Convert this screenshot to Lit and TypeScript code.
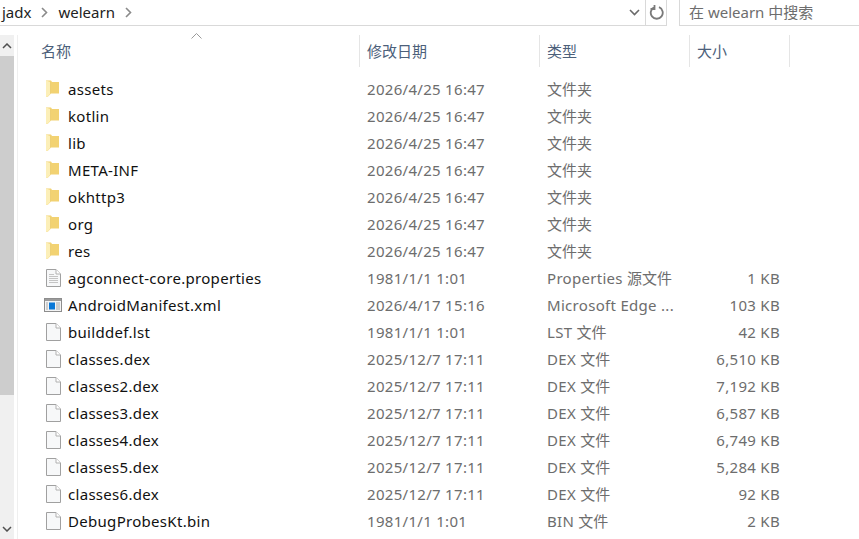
import { LitElement, html, css, svg } from "lit";
import { customElement } from "lit/decorators.js";

type Row = [string, string, string, string, string];
const D = "2026/4/25 16:47";
const rows: Row[] = [
  ["folder", "assets", D, "文件夹", ""],
  ["folder", "kotlin", D, "文件夹", ""],
  ["folder", "lib", D, "文件夹", ""],
  ["folder", "META-INF", D, "文件夹", ""],
  ["folder", "okhttp3", D, "文件夹", ""],
  ["folder", "org", D, "文件夹", ""],
  ["folder", "res", D, "文件夹", ""],
  ["text", "agconnect-core.properties", "1981/1/1 1:01", "Properties 源文件", "1 KB"],
  ["xml", "AndroidManifest.xml", "2026/4/17 15:16", "Microsoft Edge ...", "103 KB"],
  ["file", "builddef.lst", "1981/1/1 1:01", "LST 文件", "42 KB"],
  ["file", "classes.dex", "2025/12/7 17:11", "DEX 文件", "6,510 KB"],
  ["file", "classes2.dex", "2025/12/7 17:11", "DEX 文件", "7,192 KB"],
  ["file", "classes3.dex", "2025/12/7 17:11", "DEX 文件", "6,587 KB"],
  ["file", "classes4.dex", "2025/12/7 17:11", "DEX 文件", "6,749 KB"],
  ["file", "classes5.dex", "2025/12/7 17:11", "DEX 文件", "5,284 KB"],
  ["file", "classes6.dex", "2025/12/7 17:11", "DEX 文件", "92 KB"],
  ["file", "DebugProbesKt.bin", "1981/1/1 1:01", "BIN 文件", "2 KB"],
  ["file", "", "", "", ""],
];

const folderIcon = svg`<svg class="folder" width="13" height="18" viewBox="0 0 13 18">
  <path d="M0 .5h5l1 1.500h7v11.500H5L1.500 17 0 16.500z" fill="#f2d272"/>
  <path d="M0 .5 4.500 2v11.500L1.500 17 0 16.500z" fill="#fcefb8"/>
  <path d="M4.500 2v11.500" fill="none" stroke="#e8c766" stroke-width=".7"/>
</svg>`;
const fileIcon = svg`<svg width="15" height="18" viewBox="0 0 15 18">
  <path d="M.5 .5h9.500l4.500 4.500v12.500h-14z" fill="#f7f8f9" stroke="#a0a0a0"/>
  <path d="M10 .5V5h4.500" fill="#fff" stroke="#b0b0b0"/>
</svg>`;
const textIcon = svg`<svg width="15" height="18" viewBox="0 0 15 18">
  <path d="M.5 .5h9.500l4.500 4.500v12.500h-14z" fill="#f7f8f9" stroke="#a0a0a0"/>
  <path d="M10 .5V5h4.500" fill="#fff" stroke="#b0b0b0"/>
  <path d="M3 5.500h5M3 7.500h9M3 9.500h9M3 11.500h9M3 13.500h9" stroke="#c4c4c4"/>
</svg>`;
const xmlIcon = svg`<svg class="xml" width="18" height="14" viewBox="0 0 18 14">
  <rect x=".5" y=".5" width="17" height="13" fill="#f4f4f4" stroke="#8d8d8d"/>
  <rect x="1" y="1" width="16" height="2" fill="#9b9b9b"/>
  <rect x="5" y="4.500" width="6" height="7" fill="#0a78d7"/>
  <path d="M2 5h2M2 7h2M2 9h2M2 11h2M12 5h4M12 7h4M12 9h4M12 11h4" stroke="#a9a9a9"/>
</svg>`;
const icons: Record<string, unknown> = { folder: folderIcon, file: fileIcon, text: textIcon, xml: xmlIcon };

const mixed = (s: string) =>
  s.split(/([\u4e00-\u9fff]+)/).map((p) =>
    /[\u4e00-\u9fff]/.test(p) ? html`<span class="cjk">${p}</span>` : p
  );

@customElement("app-root")
export class AppRoot extends LitElement {
  static styles = css`
    :host {
      display: block;
      width: 859px;
      height: 539px;
      overflow: hidden;
      background: #fff;
      color: #1a1a1a;
      font-family: "Noto Sans", "Noto Sans CJK SC", sans-serif;
      font-size: 15px;
    }
    .top { display: flex; height: 26px; }
    .crumbs {
      flex: 0 0 667px; display: flex; align-items: center; box-sizing: border-box;
      border-bottom: 1px solid #d9d9d9; border-right: 1px solid #d9d9d9; padding-left: 2px;
      height: 26px;
    }
    .crumb { color: #222; line-height: 24px; margin-bottom: 2px; }
    .chev { margin: 0 10px 0 10px; display: flex; }
    .crumbs .spacer { flex: 1; }
    .ctl { display: flex; align-items: center; justify-content: center; height: 25px; }
    .dd { width: 16px; margin-right: 3px; }
    .refresh { width: 20px; border-left: 1px solid #d9d9d9; height: 25px; }
    .gap { flex: 0 0 12px; }
    .search {
      flex: 1; box-sizing: border-box; border-left: 1px solid #d9d9d9; border-bottom: 1px solid #d9d9d9;
      height: 26px; padding-left: 9px; color: #6d6d6d; line-height: 25px; font-size: 15px;
    }
    .main { display: flex; height: 513px; padding-top: 9px; box-sizing: border-box; }
    .sb {
      flex: 0 0 14px; height: 504px; background: #f0f0f0; display: flex; flex-direction: column;
    }
    .sb .btn { height: 21px; display: flex; align-items: center; justify-content: center; flex: none; }
    .sb .thumb { height: 339px; background: #cdcdcd; flex: none; }
    .sb .track { flex: 1; }
    .list { flex: 1; margin-left: 3px; border-left: 1px solid #efefef; min-width: 0; }
    .head, .row {
      display: grid;
      grid-template-columns: 342px 180px 150px 100px;
    }
    .head { height: 32px; position: relative; color: #4c607a; }
    .hc {
      box-sizing: border-box; border-right: 1px solid #e5e5e5; padding-left: 7px;
      line-height: 32px; height: 32px; font-size: 15px;
    }
    .hc.first { padding-left: 23px; }
    .sort { position: absolute; left: 173px; top: -2px; }
    .rows { padding-top: 9px; }
    .row { height: 27px; align-items: center; line-height: 27px; white-space: nowrap; letter-spacing: .3px; }
    .name { display: flex; align-items: center; padding-left: 28px; color: #111; }
    .ic { flex: 0 0 22px; display: flex; align-items: center; margin-bottom: 2px; }
    .ic .xml { margin-left: -2px; }
    .dim { padding-left: 7px; color: #6d6d6d; font-size: 15px; }
    .cjk { letter-spacing: 0; }
    .size { text-align: right; padding-right: 10px; padding-left: 0; }
  `;

  render() {
    const chev = html`<span class="chev"><svg width="7" height="11" viewBox="0 0 7 11"><path d="M1 1l4.500 4.500L1 10" fill="none" stroke="#8a8a8a" stroke-width="1.600"/></svg></span>`;
    return html`
      <div class="top">
        <div class="crumbs">
          <span class="crumb">jadx</span>${chev}<span class="crumb">welearn</span>${chev}
          <span class="spacer"></span>
          <span class="ctl dd"><svg width="11" height="7" viewBox="0 0 11 7"><path d="M1 1l4.500 4.500L10 1" fill="none" stroke="#6a6a6a" stroke-width="1.600"/></svg></span>
          <span class="ctl refresh"><svg width="15" height="15" viewBox="0 0 15 15"><path d="M5.500 2.200A6 6 0 1 0 10 2.200M5.500 0v4H1.500" fill="none" stroke="#7a7a7a" stroke-width="1.800"/></svg></span>
        </div>
        <div class="gap"></div>
        <div class="search">在 welearn 中搜索</div>
      </div>
      <div class="main">
        <div class="sb">
          <div class="btn"><svg width="10" height="6" viewBox="0 0 10 6"><path d="M1 5l4-4 4 4" fill="none" stroke="#505050" stroke-width="1.500"/></svg></div>
          <div class="thumb"></div>
          <div class="track"></div>
          <div class="btn"><svg width="10" height="6" viewBox="0 0 10 6"><path d="M1 1l4 4 4-4" fill="none" stroke="#505050" stroke-width="1.500"/></svg></div>
        </div>
        <div class="list">
          <div class="head">
            <svg class="sort" width="11" height="6" viewBox="0 0 11 6"><path d="M.5 5.500l5-5 5 5" fill="none" stroke="#9a9a9a"/></svg>
            <div class="hc first">名称</div><div class="hc">修改日期</div><div class="hc">类型</div><div class="hc">大小</div>
          </div>
          <div class="rows">
            ${rows.map(
              (r) => html`<div class="row">
                <div class="name"><span class="ic">${icons[r[0]]}</span>${r[1]}</div>
                <div class="dim">${r[2]}</div>
                <div class="dim">${mixed(r[3])}</div>
                <div class="dim size">${r[4]}</div>
              </div>`
            )}
          </div>
        </div>
      </div>
    `;
  }
}
